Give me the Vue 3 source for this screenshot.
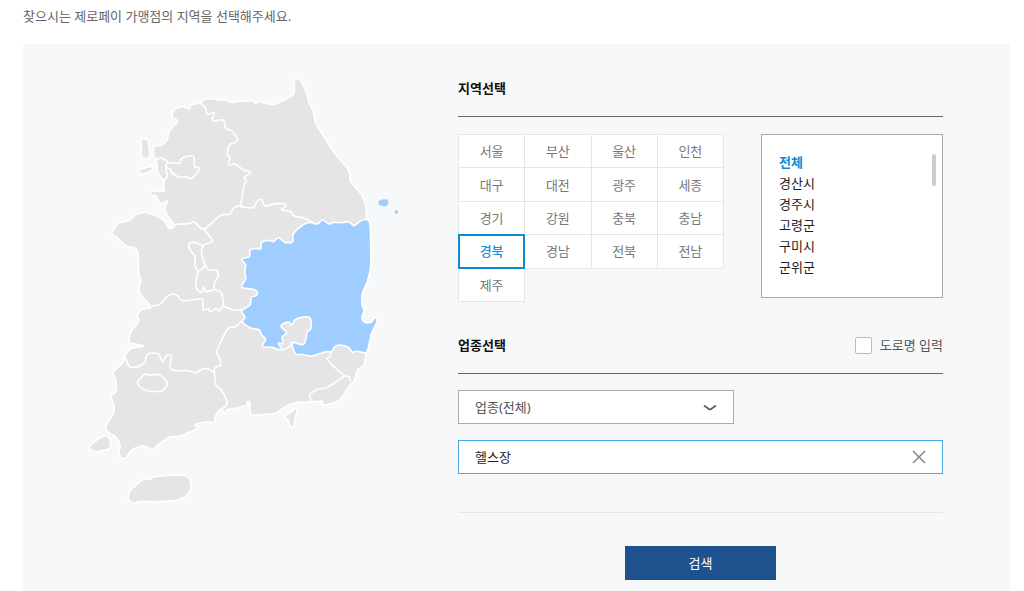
<script setup>
import { ref } from 'vue'

const regions = [
  '서울', '부산', '울산', '인천',
  '대구', '대전', '광주', '세종',
  '경기', '강원', '충북', '충남',
  '경북', '경남', '전북', '전남',
  '제주',
]
const districts = ['전체', '경산시', '경주시', '고령군', '구미시', '군위군']

const region = ref('경북')
const district = ref('전체')
const keyword = ref('헬스장')
const byRoad = ref(false)

// Turns "x,y x,y ..." into a softly rounded path through the points.
function smooth(text, closed = false) {
  const pts = text.trim().split(/\s+/).map((p) => p.split(',').map(Number))
  const n = pts.length
  const at = (i) => (closed ? pts[(i + n) % n] : pts[Math.max(0, Math.min(n - 1, i))])
  const k = 0.16
  let d = `M${pts[0][0]} ${pts[0][1]}`
  for (let i = 0; i < (closed ? n : n - 1); i++) {
    const [a, b, c, e] = [at(i - 1), at(i), at(i + 1), at(i + 2)]
    d += `C${b[0] + (c[0] - a[0]) * k} ${b[1] + (c[1] - a[1]) * k} ${c[0] - (e[0] - b[0]) * k} ${c[1] - (e[1] - b[1]) * k} ${c[0]} ${c[1]}`
  }
  return closed ? d + 'Z' : d
}

const land = [
  // mainland
  `222,230 245,226 262,208 268,182 291,158 289,149 278,142 278,127 290,115 310,110 328,117 334,105 360,98 372,88
   405,87 415,92 432,88 455,97 475,94 515,93 523,96 528,102 535,95 580,104 600,95 628,82 642,70 643,35 650,27
   660,27 667,40 682,75 686,95 700,125 706,155 722,185 768,255 800,292 810,315 812,335 845,375 857,405 860,445
   870,463 872,525 872,590 862,635 847,670 846,705 852,720 846,745 858,758 875,755 885,742 891,755 875,790
   868,820 858,850 852,885 832,900 825,928 820,937 805,952 785,985 770,995 745,1003 728,1003 725,993 685,997
   650,998 615,1010 590,1028 565,1032 522,1036 510,1025 510,998 502,995 497,1007 450,1018 440,1020 436,1030
   420,1020 405,1040 403,1057 380,1056 345,1064 352,1075 300,1098 270,1100 240,1120 218,1138 190,1128 155,1140
   138,1163 122,1163 117,1145 120,1125 108,1102 82,1085 78,1068 100,1030 102,1005 92,978 107,965 108,930
   100,908 130,875 135,855 155,835 192,828 150,818 148,800 156,780 175,755 172,735 185,718 212,710 178,668
   182,630 177,615 176,600 175,560 170,540 160,532 138,528 108,500 97,492 99,482 115,460 150,450 165,435
   190,428 210,430 250,450 267,475 282,465 258,430 256,410 262,393 240,400 228,378 212,375 215,363 252,363
   250,348 252,333 235,310 228,268 222,260`,
  '182,215 192,206 205,215 208,262 190,264 182,255 185,235',
  '176,300 200,292 217,289 220,295 213,303 190,312 178,308',
  '30,1128 50,1110 75,1097 90,1108 92,1122 85,1137 45,1145 32,1138',
  '145,1280 152,1260 190,1228 210,1227 225,1220 300,1215 323,1220 332,1238 328,1266 300,1288 240,1295 180,1294 165,1300 148,1292',
  '615,1038 632,1028 648,1014 651,1020 646,1045 640,1070 630,1068 625,1052',
].map((p) => smooth(p, true))

const borders = [
  '360,98 375,112 382,133 403,127 398,152 430,150 437,175 455,183 472,208 465,218 448,225 442,255 450,262 446,284 465,282 490,300 512,307 493,322 498,332 490,355 483,405',
  '483,410 520,413 530,395 545,388 555,408 575,403 605,400 618,407 605,419 632,425 642,438 668,443 695,455',
  '267,475 282,465 330,460 342,455 372,477 420,437 450,432 460,415 483,405',
  '372,477 396,510 394,517 370,527 365,550 377,588 388,600 408,600 415,618 403,640 405,658 425,670 430,710',
  '370,527 345,518 330,518 328,535 345,560 345,585 355,603 377,588',
  '355,603 347,640 355,663 367,665 370,650 378,664 403,660',
  '212,710 240,702 258,682 278,672 292,677 308,692 362,687 369,695 370,720 385,715 390,725 410,715 418,723 430,710 460,720 485,718',
  '485,755 465,770 445,775 425,810 410,848 417,860 422,885 405,893 403,908',
  '135,855 147,888 175,890 195,875 203,852 235,852 248,877 258,858 275,858 270,890 285,902 320,902 350,908 365,898 385,897 403,908',
  '403,908 407,945 422,957 440,990 440,1005 420,1020',
  '228,268 245,265 265,278 258,298 262,318 250,333',
  '750,848 752,858 742,868 770,897 795,917 807,920 812,935',
  '795,917 765,937 740,953 715,958 690,973 692,985 688,997',
].map((p) => smooth(p))

const enclaves = [
  '173,937 195,912 208,916 238,914 262,940 250,960 240,964 205,963 182,952',
  '265,278 298,280 303,267 325,258 342,262 343,290 357,293 350,310 332,326 318,320 300,322 275,309 272,298 258,292',
].map((p) => smooth(p, true))

const selected = smooth(
  `860,448 838,455 822,467 805,455 785,458 760,457 748,462 727,450 712,462 690,457 668,465 640,492 638,515
   615,517 595,503 580,515 568,511 545,517 542,537 528,535 510,540 508,560 485,567 497,585 494,605 497,625
   485,648 490,654 520,658 532,666 528,677 513,682 510,705 485,722 495,742 487,755 510,773 538,780 545,795
   557,808 547,830 575,832 605,840 595,820 608,820 607,800 620,788 603,770 612,760 628,757 635,765 645,750
   665,742 690,743 693,775 682,785 678,805 672,822 660,823 640,817 635,822 647,852 665,853 695,858 740,845 755,845
   765,830 780,825 805,832 818,847 830,843 858,848 868,820 875,790 891,755 885,742 875,755 858,758 846,745
   852,720 846,705 847,670 862,635 872,590 872,525 870,463`, true)

const islets = [
  '895,400 900,391 915,388 924,391 924,403 915,409 898,405',
  '944,424 951,421 954,428 950,432 946,430',
].map((p) => smooth(p, true))
</script>

<template>
  <main class="page">
    <p class="intro">찾으시는 제로페이 가맹점의 지역을 선택해주세요.</p>
    <form class="panel" @submit.prevent>
      <div class="map">
        <svg viewBox="0 0 990 1329" role="img" aria-label="지역 지도">
          <path v-for="d in land" :key="d" :d="d" class="land" />
          <path v-for="d in borders" :key="d" :d="d" class="border" />
          <path v-for="d in enclaves" :key="d" :d="d" class="land" />
          <path :d="selected" class="chosen" />
          <path d="M605 840Q625 838 640 817" class="border" />
          <path v-for="d in islets" :key="d" :d="d" class="islet" />
        </svg>
      </div>

      <div class="fields">
        <div class="head"><h2>지역선택</h2></div>
        <div class="places">
          <div class="regions">
            <button
              v-for="name in regions" :key="name" type="button"
              :class="{ on: name === region }" :aria-pressed="name === region"
              @click="region = name"
            >{{ name }}</button>
          </div>
          <div class="districts">
            <ul>
              <li v-for="name in districts" :key="name">
                <button type="button" :class="{ on: name === district }" @click="district = name">{{ name }}</button>
              </li>
            </ul>
            <span class="thumb"></span>
          </div>
        </div>

        <div class="head second">
          <h2>업종선택</h2>
          <label class="road"><input v-model="byRoad" type="checkbox">도로명 입력</label>
        </div>
        <div class="kind">
          <select aria-label="업종">
            <option>업종(전체)</option>
          </select>
          <svg viewBox="0 0 14 8" aria-hidden="true"><path d="M1 1.5L5.5 4.8Q7 5.8 8.500 4.800L13 1.500" /></svg>
        </div>
        <div class="keyword">
          <input v-model="keyword" type="text" aria-label="검색어">
          <button type="button" aria-label="지우기" @click="keyword = ''">
            <svg viewBox="0 0 14 14" aria-hidden="true"><path d="M1 1L13 13M13 1L1 13" /></svg>
          </button>
        </div>
        <div class="actions"><button type="submit">검색</button></div>
      </div>
    </form>
  </main>
</template>

<style>
body {
  background: #fff;
}
</style>

<style scoped>
* {
  box-sizing: border-box;
}
.page {
  display: flex;
  flex-direction: column;
  min-height: 100vh;
  padding: 0 14px 0 23px;
  font: 13px/20px "Noto Sans", "Noto Sans CJK KR", sans-serif;
  color: #222;
}
button, input, select {
  margin: 0;
  font: inherit;
}
button {
  padding: 0;
  cursor: pointer;
}
.intro {
  margin: 6px 0 18px;
  color: #666;
}
.panel {
  display: grid;
  flex: 1;
  grid-template-columns: 435fr 485fr;
  padding: 26px 67px 11px 0;
  background: #f7f8fa;
}
.map svg {
  display: block;
  width: 330px;
  margin-left: 57px;
}
.land, .chosen, .border {
  stroke: #fff;
  stroke-width: 5;
  stroke-linejoin: round;
  stroke-linecap: round;
}
.land {
  fill: #e5e5e5;
}
.chosen, .islet {
  fill: #a0cdff;
}
.border {
  fill: none;
}
.head {
  display: flex;
  align-items: center;
  justify-content: space-between;
  height: 47px;
  padding: 0 0 10px;
  border-bottom: 1px solid #666;
}
.head.second {
  margin-top: 29px;
}
h2 {
  margin: 0;
  font-size: 13px;
  font-weight: 700;
  color: #111;
}
.places {
  display: flex;
  align-items: flex-start;
  justify-content: space-between;
  height: 164px;
  margin-top: 17px;
}
.regions {
  display: grid;
  grid-template-columns: repeat(4, 1fr);
  grid-template-rows: repeat(5, 1fr);
  flex: 0 0 266px;
  height: 168px;
  padding: 0 1px 1px 0;
}
.regions button {
  margin: 0 -1px -1px 0;
  border: 1px solid #e6e6e6;
  background: #fff;
  color: #777;
}
.regions .on {
  z-index: 1;
  border: 2px solid #0f8bd3;
  color: #1a8fdb;
  font-weight: 500;
}
.districts {
  position: relative;
  flex: 0 0 182px;
  height: 164px;
  padding: 17px;
  border: 1px solid #aaa;
  background: #fff;
}
.districts ul {
  margin: 0;
  padding: 0;
  list-style: none;
}
.districts li {
  height: 21px;
}
.districts button {
  display: block;
  border: 0;
  background: none;
  color: #222;
}
.districts .on {
  color: #0f8bd3;
  font-weight: 700;
}
.thumb {
  position: absolute;
  top: 19px;
  right: 6px;
  width: 4px;
  height: 32px;
  border-radius: 2px;
  background: #ccc;
}
.road {
  display: flex;
  align-items: center;
  gap: 8px;
  color: #555;
}
.road input {
  appearance: none;
  width: 17px;
  height: 17px;
  border: 1px solid #bbb;
  border-radius: 2px;
  background: #fff;
}
.road input:checked {
  background: #0f8bd3;
}
.kind {
  position: relative;
  width: 276px;
  margin-top: 16px;
}
.kind select {
  appearance: none;
  display: block;
  width: 100%;
  height: 34px;
  padding: 0 16px;
  border: 1px solid #aaa;
  border-radius: 0;
  background: #fff;
  color: #555;
}
.kind svg {
  position: absolute;
  top: 14px;
  right: 17px;
  width: 14px;
  height: 8px;
  fill: none;
  stroke: #666;
  stroke-width: 2;
  pointer-events: none;
}
.keyword {
  display: flex;
  height: 34px;
  margin-top: 16px;
  border: 1px solid #4aa8e0;
  background: #fff;
}
.keyword input {
  flex: 1;
  min-width: 0;
  padding: 0 16px;
  border: 0;
  outline: 0;
  background: none;
  color: #222;
}
.keyword button {
  display: grid;
  place-items: center;
  width: 46px;
  border: 0;
  background: none;
}
.keyword svg {
  width: 14px;
  height: 14px;
  fill: none;
  stroke: #888;
  stroke-width: 1.5;
}
.actions {
  margin-top: 38px;
  padding-top: 33px;
  border-top: 1px solid #e6e6e6;
  text-align: center;
}
.actions button {
  width: 151px;
  height: 34px;
  border: 0;
  background: #1e528e;
  color: #fff;
}
</style>
